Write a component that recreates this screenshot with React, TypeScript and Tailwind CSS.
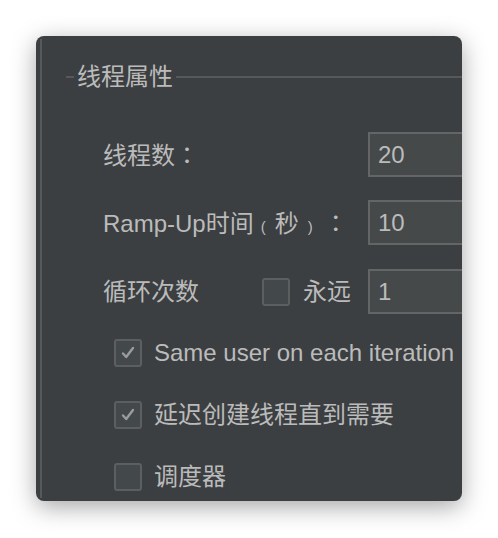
const font = { fontFamily: '"Liberation Sans", "Noto Sans CJK SC", sans-serif' };

const Box = ({ checked }: { checked?: boolean }) => (
  <div className="w-[28px] h-[28px] shrink-0 rounded-[3px] border-2 border-[#5c5e60] bg-[#43484a] flex items-center justify-center">
    {checked && (
      <svg width="18" height="18" viewBox="0 0 18 18">
        <path d="M4 9.5 L7.2 13 L14 4" fill="none" stroke="#9a9b9c" strokeWidth="2.4" strokeLinecap="round" strokeLinejoin="round" />
      </svg>
    )}
  </div>
);

const Field = ({ value }: { value: string }) => (
  <div className="ml-auto w-[140px] h-[45px] shrink-0 border-2 border-[#646566] bg-[#45494a] flex items-center pl-[8px] text-[#bbbbbb]">
    {value}
  </div>
);

// centred full-width colon, as in the original UI font
const Colon = () => <span className="font-['Noto_Sans_CJK_TC']">：</span>;

export default function App() {
  return (
    <div className="w-[498px] h-[538px] bg-white pl-[36px] pt-[36px]" style={font}>
      <div className="w-[426px] h-[465px] rounded-[8px] bg-[#3c3f41] overflow-hidden shadow-[0_6px_24px_rgba(0,0,0,0.35)] flex">
        <div className="ml-[4px] my-[3px] w-[2px] shrink-0 bg-[#56585a]" />
        <div className="flex-1 flex flex-col text-[24px] text-[#bbbbbb] leading-none">
          {/* group title */}
          <div className="mt-[29px] h-[24px] flex items-center">
            <div className="ml-[24px] w-[8px] h-[2px] bg-[#56585a]" />
            <span className="ml-[3px] whitespace-nowrap">线程属性</span>
            <div className="ml-[3px] flex-1 h-[2px] bg-[#56585a]" />
          </div>

          <div className="flex flex-col">
            <div className="mt-[43px] h-[45px] flex items-center pl-[61px] w-[466px] shrink-0">
              <span>线程数<Colon /></span>
              <Field value="20" />
            </div>
            <div className="mt-[23px] h-[45px] flex items-center pl-[61px] w-[466px] shrink-0">
              <span className="whitespace-nowrap">
                Ramp-Up时间
                <span className="text-[15px] ml-[7px] mr-[9px]">(</span>
                秒
                <span className="text-[15px] ml-[9px] mr-[11px]">)</span>
                <Colon />
              </span>
              <Field value="10" />
            </div>
            <div className="mt-[24px] h-[45px] flex items-center pl-[61px] w-[466px] shrink-0">
              <span>循环次数</span>
              <div className="ml-[63px]"><Box /></div>
              <span className="ml-[13px]">永远</span>
              <Field value="1" />
            </div>
          </div>

          <div className="mt-[25px] flex flex-col gap-[34px] pl-[72px]">
            <div className="h-[28px] flex items-center gap-[12px] whitespace-nowrap">
              <Box checked />
              <span>Same user on each iteration</span>
            </div>
            <div className="h-[28px] flex items-center gap-[12px] whitespace-nowrap">
              <Box checked />
              <span>延迟创建线程直到需要</span>
            </div>
            <div className="h-[28px] flex items-center gap-[12px] whitespace-nowrap">
              <Box />
              <span>调度器</span>
            </div>
          </div>
        </div>
      </div>
    </div>
  );
}
